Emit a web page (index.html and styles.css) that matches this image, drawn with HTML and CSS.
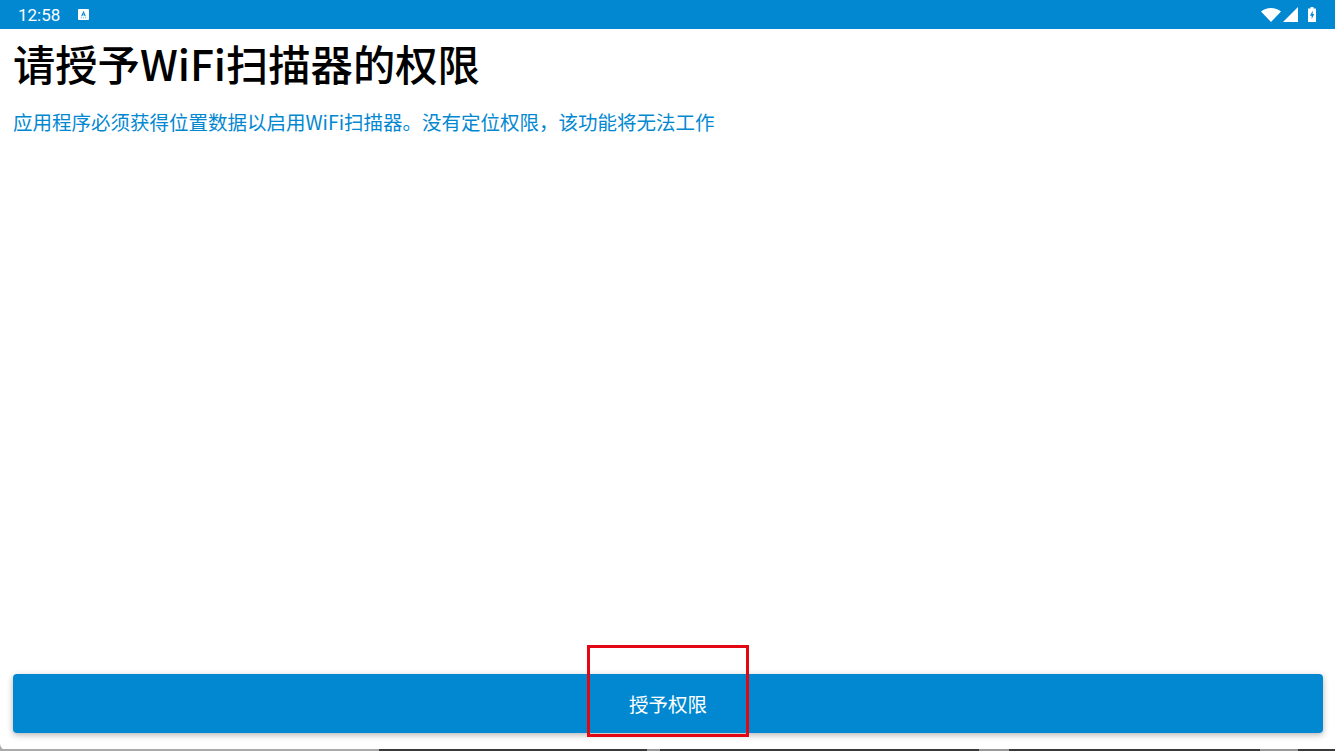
FILE: index.html
```html
<!DOCTYPE html>
<html lang="zh-CN">
<head>
    <meta charset="UTF-8">
    <meta name="viewport" content="width=device-width, initial-scale=1.0">
    <title>WiFi扫描器</title>
    <link rel="stylesheet" href="styles.css">
</head>
<body>
    <div class="screen">
        <div class="status-bar">
            <div class="status-left">
                <span class="clock">12:58</span>
                <svg class="notif-icon" width="11" height="11" viewBox="0 0 12 12">
                    <path fill="#fff" fill-rule="evenodd" d="M1 0h10a1 1 0 0 1 1 1v10a1 1 0 0 1-1 1H1a1 1 0 0 1-1-1V1a1 1 0 0 1 1-1zM6 2 3.400 8h1.300l.4-1.100h1.800l.4 1.100h1.300L6 2zM6 4.400l.5 1.500h-1L6 4.400zM3 9.400h1v.8H3zm2.500 0h1v.8h-1zm2.500 0h1v.8H8z"/>
                </svg>
            </div>
            <div class="status-right">
                <svg width="20" height="14" viewBox="0 0 20 14">
                    <path fill="#fff" d="M10 14 0 3.400C2.700 1.300 6.200 0 10 0s7.300 1.300 10 3.400z"/>
                </svg>
                <svg width="15" height="15" viewBox="0 0 15 15">
                    <path fill="#fff" d="M15 0v15H0z"/>
                </svg>
                <svg class="battery" width="8" height="15" viewBox="0 0 8 15">
                    <path fill="#fff" fill-rule="evenodd" d="M2.500 0h3v1.500H8V15H0V1.500h2.500zM4.800 3.500 2 8.800h1.700V12l2.500-5H4.600z"/>
                </svg>
            </div>
        </div>

        <div class="content">
            <h1>请授予WiFi扫描器的权限</h1>
            <p class="message">应用程序必须获得位置数据以启用WiFi扫描器。没有定位权限，该功能将无法工作</p>
        </div>

        <div class="actions">
            <button class="grant-button">授予权限</button>
        </div>
    </div>
    <div class="highlight-box"></div>
    <div class="nav-edge"></div>
    <div class="window-corner"></div>
</body>
</html>
```

FILE: styles.css
```css
html, body {
    height: 100%;
}

body {
    margin: 0;
    background-color: #fff;
    overflow: hidden;
    font-family: "Noto Sans CJK SC", "Noto Sans", sans-serif;
}

.screen {
    display: flex;
    flex-direction: column;
    height: 100%;
}

.status-bar {
    display: flex;
    justify-content: space-between;
    align-items: center;
    height: 29px;
    padding: 0 19px 0 18px;
    background-color: #0288d1;
    color: #fff;
}

.status-left,
.status-right {
    display: flex;
    align-items: center;
}

.clock {
    font-family: Roboto, sans-serif;
    font-size: 17px;
    margin-right: 18px;
}

.notif-icon {
    margin-top: 0;
}

.status-right {
    gap: 2px;
}

.battery {
    margin-left: 8px;
}

.content {
    flex: 1;
    padding: 0 13px;
}

h1 {
    margin: 6px 0 0;
    font-size: 42.3px;
    font-weight: 500;
    line-height: 56px;
    color: #000;
}

.message {
    margin: 17px 0 0;
    font-size: 19.5px;
    line-height: 28px;
    color: #0288d1;
}

.actions {
    padding: 0 12px 18px 13px;
}

.grant-button {
    display: block;
    width: 100%;
    height: 59px;
    border: none;
    border-radius: 4px;
    background-color: #0288d1;
    color: #fff;
    font-family: inherit;
    font-size: 19.500px;
    box-shadow: 0 2px 6px rgba(0, 0, 0, 0.3);
}

/* annotation drawn over the screenshot */
.highlight-box {
    position: absolute;
    left: 587px;
    top: 645px;
    width: 156px;
    height: 86px;
    border: 3px solid #e30613;
}

/* strip of what is behind the app window */
.nav-edge {
    position: absolute;
    left: 0;
    right: 0;
    bottom: 0;
    height: 2px;
    background: linear-gradient(to right, #aaa 379px, #3a3a3a 379px, #3a3a3a 647px, #999 647px, #999 660px, #3a3a3a 660px, #3a3a3a 979px, #999 979px, #999 1009px, #3a3a3a 1009px, #3a3a3a 1260px, #999 1260px, #999 1298px, #3a3a3a 1298px);
}

.window-corner {
    position: absolute;
    left: 0;
    bottom: 0;
    width: 8px;
    height: 8px;
    background: radial-gradient(circle at 100% 0, transparent 7.5px, #aaa 8.500px);
}
```
